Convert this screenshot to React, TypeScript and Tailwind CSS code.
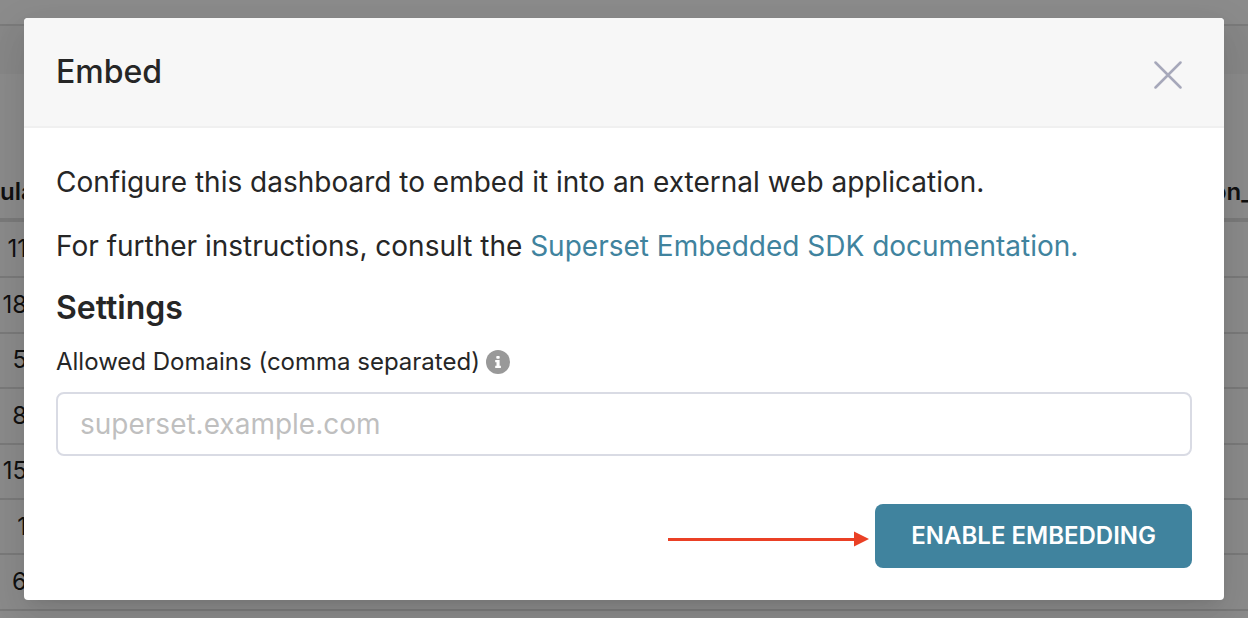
import React from "react";

const rows = ["11", "18", "5", "8", "15", "1", "6"];

function DashboardTable() {
  return (
    <div aria-hidden="true" className="absolute inset-0 overflow-hidden bg-white text-2xl text-[#1f1f1f]">
      <div className="h-6" />
      <div className="h-[50px] border-t-2 border-[#e0e0e0] bg-[#f7f7f7]" />
      <table className="h-[537px] w-full table-fixed border-collapse">
        <thead>
          <tr className="h-[146px] border-b-4 border-[#e0e0e0] align-bottom font-semibold">
            <th className="w-1/2 pb-2.5 text-left font-semibold">ula</th>
            <th className="p-0 pb-2.5">
              <div className="flex justify-end">
                <span className="w-9 text-left font-semibold">on_</span>
              </div>
            </th>
          </tr>
        </thead>
        <tbody>
          {rows.map((value) => (
            <tr key={value} className="border-b-2 border-[#e0e0e0]">
              <td className="p-0">
                <span className="block w-[27px] text-right">{value}</span>
              </td>
              <td className="p-0" />
            </tr>
          ))}
        </tbody>
      </table>
    </div>
  );
}

function CloseIcon() {
  return (
    <svg viewBox="0 0 28 28" className="size-7" fill="none" stroke="#a6a8ba" strokeWidth="2.5" strokeLinecap="round">
      <path d="M1.5 1.5 26.5 26.5M26.5 1.5 1.5 26.5" />
    </svg>
  );
}

function InfoIcon() {
  return (
    <svg viewBox="0 0 24 24" className="size-6" role="img" aria-label="Information">
      <circle cx="12" cy="12" r="12" fill="#999999" />
      <rect x="10.3" y="5.9" width="3.4" height="2.8" rx="0.8" fill="#fff" />
      <path d="M9.2 10h4.4v5.7h1.3v2.3H9.2v-2.3h1.3v-3.4H9.2z" fill="#fff" />
    </svg>
  );
}

function Arrow() {
  return (
    <svg viewBox="0 0 202 64" className="h-16 w-[202px]" fill="#ea4025" aria-hidden="true">
      <rect x="1" y="34" width="187" height="3" />
      <path d="M187 27.5 202 35 187 42.5z" />
    </svg>
  );
}

export default function App() {
  return (
    <div className="relative min-h-screen overflow-hidden font-['Inter',sans-serif] [font-optical-sizing:none]">
      <DashboardTable />
      <div className="absolute inset-0 bg-black/45" />
      <main className="relative px-6 py-[18px]">
        <section
          role="dialog"
          aria-labelledby="embed-title"
          className="overflow-hidden rounded bg-white text-[28px] text-[#262626] shadow-[0_6px_12px_-8px_rgba(0,0,0,0.12),0_12px_32px_0_rgba(0,0,0,0.08),0_18px_56px_16px_rgba(0,0,0,0.05)]"
        >
          <header className="flex items-center justify-between border-b-2 border-[#f0f0f0] bg-[#f7f7f7] px-8 py-8">
            <h1 id="embed-title" className="text-[32px] leading-[44px] font-medium">
              Embed
            </h1>
            <button type="button" aria-label="Close" className="mr-2.5 pt-1.5">
              <CloseIcon />
            </button>
          </header>
          <div className="px-8 pt-8 pb-8">
            <p className="leading-[44px]">Configure this dashboard to embed it into an external web application.</p>
            <p className="mt-5 leading-[44px]">
              For further instructions, consult the{" "}
              <a href="#documentation" className="text-[#40839e]">
                Superset Embedded SDK documentation.
              </a>
            </p>
            <h2 className="mt-5 text-[32px] leading-[40px] font-semibold">Settings</h2>
            <div className="mt-4 flex items-center gap-1.5 text-2xl leading-[36px]">
              <label htmlFor="allowed-domains">Allowed Domains (comma separated)</label>
              <InfoIcon />
            </div>
            <input
              id="allowed-domains"
              type="text"
              placeholder="superset.example.com"
              className="mt-3 block h-16 w-full rounded-lg border-2 border-[#d9dbe4] px-[22px] placeholder:text-[#bfbfbf]"
            />
            <div className="mt-12 flex items-center justify-end gap-1.5">
              <Arrow />
              <button
                type="button"
                className="h-16 rounded-lg bg-[#40839e] px-9 text-2xl font-semibold text-white uppercase"
              >
                Enable embedding
              </button>
            </div>
          </div>
        </section>
      </main>
    </div>
  );
}
